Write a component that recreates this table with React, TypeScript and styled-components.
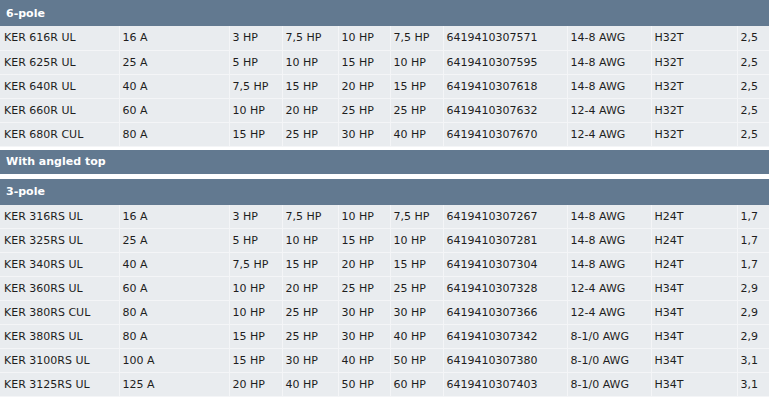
import React from 'react';
import styled, {createGlobalStyle} from 'styled-components';

const GlobalStyle = createGlobalStyle`
    html, body {
        margin: 0;
        padding: 0;
        background: #ffffff;
    }

    body {
        font-family: "DejaVu Sans", Verdana, sans-serif;
        font-size: 11px;
        color: #222;
    }
`;

type Row = [string, string, string, string, string, string, string, string, string, string];

const sixPole: Row[] = [
    ['KER 616R UL', '16 A', '3 HP', '7,5 HP', '10 HP', '7,5 HP', '6419410307571', '14-8 AWG', 'H32T', '2,5'],
    ['KER 625R UL', '25 A', '5 HP', '10 HP', '15 HP', '10 HP', '6419410307595', '14-8 AWG', 'H32T', '2,5'],
    ['KER 640R UL', '40 A', '7,5 HP', '15 HP', '20 HP', '15 HP', '6419410307618', '14-8 AWG', 'H32T', '2,5'],
    ['KER 660R UL', '60 A', '10 HP', '20 HP', '25 HP', '25 HP', '6419410307632', '12-4 AWG', 'H32T', '2,5'],
    ['KER 680R CUL', '80 A', '15 HP', '25 HP', '30 HP', '40 HP', '6419410307670', '12-4 AWG', 'H32T', '2,5'],
];

const threePole: Row[] = [
    ['KER 316RS UL', '16 A', '3 HP', '7,5 HP', '10 HP', '7,5 HP', '6419410307267', '14-8 AWG', 'H24T', '1,7'],
    ['KER 325RS UL', '25 A', '5 HP', '10 HP', '15 HP', '10 HP', '6419410307281', '14-8 AWG', 'H24T', '1,7'],
    ['KER 340RS UL', '40 A', '7,5 HP', '15 HP', '20 HP', '15 HP', '6419410307304', '14-8 AWG', 'H24T', '1,7'],
    ['KER 360RS UL', '60 A', '10 HP', '20 HP', '25 HP', '25 HP', '6419410307328', '12-4 AWG', 'H34T', '2,9'],
    ['KER 380RS CUL', '80 A', '10 HP', '25 HP', '30 HP', '30 HP', '6419410307366', '12-4 AWG', 'H34T', '2,9'],
    ['KER 380RS UL', '80 A', '15 HP', '25 HP', '30 HP', '40 HP', '6419410307342', '8-1/0 AWG', 'H34T', '2,9'],
    ['KER 3100RS UL', '100 A', '15 HP', '30 HP', '40 HP', '50 HP', '6419410307380', '8-1/0 AWG', 'H34T', '3,1'],
    ['KER 3125RS UL', '125 A', '20 HP', '40 HP', '50 HP', '60 HP', '6419410307403', '8-1/0 AWG', 'H34T', '3,1'],
];

const colWidths = [119, 110, 53, 56, 52, 53, 124, 84, 86, 32];

const Page = styled.div`
    width: 769px;
    display: flex;
    flex-direction: column;
`;

const Table = styled.table<{ $gap?: number }>`
    width: 769px;
    table-layout: fixed;
    border-collapse: collapse;
    margin-top: ${({$gap}) => $gap ?? 0}px;
`;

const HeaderCell = styled.th<{ $height: number }>`
    height: ${({$height}) => $height}px;
    padding: 0 6px;
    background: #627990;
    color: #ffffff;
    font-weight: bold;
    font-size: 11px;
    text-align: left;
    white-space: nowrap;
`;

const DataRow = styled.tr`
    height: 24px;
    background: #e9ecef;
    border-bottom: 1px solid #f4f5f7;
`;

const Cell = styled.td`
    padding: 0 0 0 3px;
    border-left: 1px solid #f4f5f7;
    white-space: nowrap;
    overflow: hidden;
    color: #1e1e1e;

    &:first-child {
        border-left: none;
        padding-left: 4px;
    }
`;

const Columns: React.FC = () => (
    <colgroup>
        {colWidths.map((w, i) => (
            <col key={i} style={{width: w}}/>
        ))}
    </colgroup>
);

const Section: React.FC<{ title: string; rows?: Row[]; gap?: number; headerHeight?: number }> = ({
    title,
    rows = [],
    gap,
    headerHeight = 26,
}) => (
    <Table $gap={gap}>
        <Columns/>
        <thead>
        <tr>
            <HeaderCell colSpan={10} $height={headerHeight}>{title}</HeaderCell>
        </tr>
        </thead>
        <tbody>
        {rows.map((r) => (
            <DataRow key={r[0]}>
                {r.map((c, i) => (
                    <Cell key={i}>{c}</Cell>
                ))}
            </DataRow>
        ))}
        </tbody>
    </Table>
);

const App: React.FC = () => (
    <>
        <GlobalStyle/>
        <Page>
            <Section title="6-pole" rows={sixPole}/>
            <Section title="With angled top" gap={3} headerHeight={24}/>
            <Section title="3-pole" gap={5} rows={threePole}/>
        </Page>
    </>
);

export default App;
